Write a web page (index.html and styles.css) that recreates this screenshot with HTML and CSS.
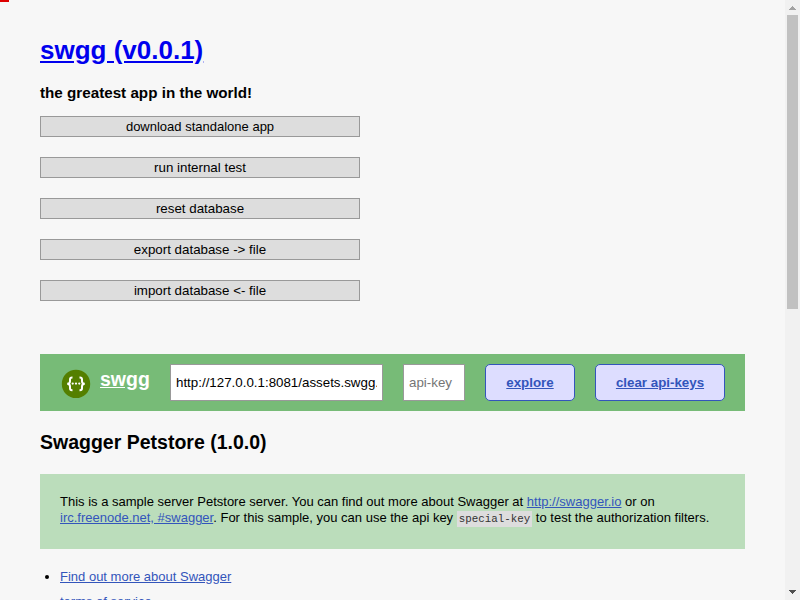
FILE: index.html
```html
<!DOCTYPE html>
<html lang="en">
<head>
<meta charset="utf-8">
<title>swgg (v0.0.1)</title>
<link rel="stylesheet" href="styles.css">
</head>
<body>
<div class="progress"></div>
<main class="page">
  <h1 class="title"><a href="#">swgg (v0.0.1)</a></h1>
  <h4 class="tagline">the greatest app in the world!</h4>
  <div class="actions">
    <a class="action download" href="#">download standalone app</a>
    <button class="action">run internal test</button>
    <button class="action">reset database</button>
    <button class="action">export database -&gt; file</button>
    <button class="action">import database &lt;- file</button>
  </div>
  <div class="header">
    <a class="brand" href="#">
      <svg class="logo" width="30" height="30" viewBox="0 0 30 30">
        <circle cx="15" cy="14.9" r="14.2" fill="#547f00"/>
        <g fill="none" stroke="#fff" stroke-width="2">
          <path d="M11.5 8.4H11Q9 8.4 9 10.4V12.2Q9 14.8 6.2 14.8Q9 14.8 9 17.4V19.2Q9 21.2 11 21.2H11.5"/>
          <path d="M18.5 8.4H19Q21 8.4 21 10.4V12.2Q21 14.8 23.8 14.8Q21 14.8 21 17.4V19.2Q21 21.2 19 21.2H18.5"/>
        </g>
        <g fill="#fff"><circle cx="11.7" cy="14.6" r="1.15"/><circle cx="15" cy="14.6" r="1.15"/><circle cx="18.3" cy="14.6" r="1.15"/></g>
      </svg>
      <span class="brand-name">swgg</span>
    </a>
    <input class="field url" type="text" value="http://127.0.0.1:8081/assets.swgg.petstore.json">
    <input class="field key" type="text" placeholder="api-key">
    <a class="btn explore" href="#">explore</a>
    <a class="btn clear" href="#">clear api-keys</a>
  </div>
  <h2 class="api-title">Swagger Petstore (1.0.0)</h2>
  <div class="description">This is a sample server Petstore server. You can find out more about Swagger at <a href="#">http://swagger.io</a> or on <a href="#">irc.freenode.net, #swagger</a>. For this sample, you can use the api key <code>special-key</code> to test the authorization filters.</div>
  <ul class="links">
    <li><a href="#">Find out more about Swagger</a></li>
    <li class="plain"><a href="#">terms of service</a></li>
  </ul>
</main>
<div class="scrollbar">
  <svg width="15" height="15" viewBox="0 0 15 15" shape-rendering="crispEdges" fill="#a3a3a3"><path d="M7 6h1v1h1v1h1v1h1v1H4V9h1V8h1V7h1z"/></svg>
  <div class="thumb"></div>
  <svg width="15" height="15" viewBox="0 0 15 15" shape-rendering="crispEdges" fill="#505050"><path d="M4 5h7v1h-1v1H9v1H8v1H7V8H6V7H5V6H4z"/></svg>
</div>
</body>
</html>
```

FILE: styles.css
```css
* {
  box-sizing: border-box;
}

html {
  height: 600px;
  overflow: hidden;
}

body {
  margin: 0;
  height: 600px;
  overflow: hidden;
  display: flex;
  background: #f7f7f7;
  color: #000;
  font: 13px/16px "Liberation Sans", Arial, sans-serif;
}

.progress {
  position: absolute;
  top: 0;
  left: 0;
  width: 9px;
  height: 2px;
  background: #d00;
}

.page {
  width: 785px;
  padding: 35px 40px 0;
}

.title {
  margin: 0;
  font-size: 26px;
  line-height: 30px;
}

.title a {
  color: #00e;
}

.tagline {
  margin: 19px 0 15px;
  font-size: 15.21px;
  line-height: 17px;
}

.actions {
  width: 320px;
  display: grid;
  gap: 20px;
}

.action {
  height: 21px;
  padding: 0;
  border: 1px solid #999;
  border-radius: 0;
  background: #ddd;
  color: #000;
  font: 13.3333px/15px "Liberation Sans", Arial, sans-serif;
}

.download {
  padding: 2px 0;
  font-size: 13px;
  text-align: center;
  text-decoration: none;
}

.header {
  display: flex;
  align-items: center;
  height: 57px;
  margin-top: 53px;
  padding: 0 20px;
  background: #7b7;
}

.brand {
  display: flex;
  flex: none;
  width: 90px;
  height: 37px;
  margin-right: 20px;
  padding-left: 1px;
  color: #fff;
  font-size: 19.5px;
  line-height: 22px;
  font-weight: bold;
}

.logo {
  margin: 5px 9px 0 0;
  flex: none;
}

.brand-name {
  margin-top: 4px;
}

.field {
  flex: none;
  height: 37px;
  margin: 0 20px 0 0;
  padding: 0 5px;
  border: 1px solid #999;
  background: #fff;
  font: 13.3333px "Liberation Sans", Arial, sans-serif;
}

.url {
  width: 213px;
}

.key {
  width: 62px;
}

.field::placeholder {
  color: #757575;
}

.btn {
  flex: none;
  height: 37px;
  border: 1px solid #35b;
  border-radius: 5px;
  background: #ddf;
  color: #35b;
  font-size: 13.3333px;
  font-weight: bold;
  line-height: 35px;
  text-align: center;
}

.explore {
  width: 90px;
  margin-right: 20px;
}

.clear {
  width: 130px;
}

.api-title {
  margin: 20px 0;
  font-size: 19.5px;
  line-height: 23px;
}

.description {
  height: 75px;
  padding: 20px;
  background: #bdb;
}

.description a,
.links a {
  color: #35b;
}

code {
  padding: 2px;
  background: #ddd;
  color: #333;
  font: 10.83px "Liberation Mono", monospace;
}

.links {
  margin: 20px 0 0;
  padding-left: 20px;
}

.links li {
  margin-bottom: 9px;
}

.links .plain {
  list-style: none;
}

.scrollbar {
  display: flex;
  flex-direction: column;
  justify-content: space-between;
  width: 15px;
  height: 600px;
  background: #f1f1f1;
}

.thumb {
  width: 11px;
  height: 294px;
  margin: 0 2px auto;
  background: #c1c1c1;
}
```
